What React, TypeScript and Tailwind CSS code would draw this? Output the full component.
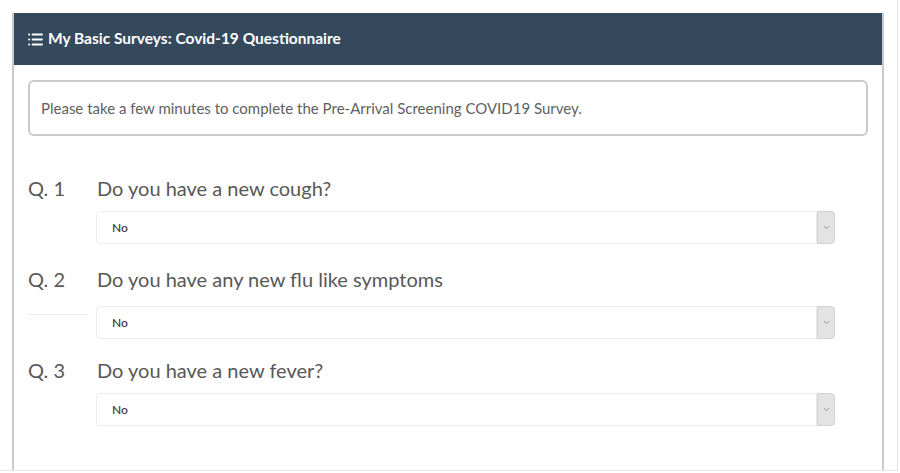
import { List, ChevronDown } from 'lucide-react';

const questions = [
  { n: 'Q. 1', text: 'Do you have a new cough?', mt: 'mt-[40px]', selMt: 'mt-[11px]', line: false },
  { n: 'Q. 2', text: 'Do you have any new flu like symptoms', mt: 'mt-[23px]', selMt: 'mt-[15px]', line: true },
  { n: 'Q. 3', text: 'Do you have a new fever?', mt: 'mt-[19px]', selMt: 'mt-[11px]', line: false },
];

function Select({ line }: { line: boolean }) {
  return (
    <div className="flex items-start">
      <div className="w-[68px] pt-2">
        {line && <div className="h-px w-[60px] bg-[#eeeeee]" />}
      </div>
      <div className="flex h-[33px] w-[739px] items-stretch">
        <div className="flex flex-1 items-center rounded-l border border-[#ececec] bg-white pl-[15px] text-[12px] font-semibold text-[#444]">
          No
        </div>
        <div className="flex w-[18px] items-center justify-center rounded-r border border-[#d2d2d2] bg-[#e3e3e3]">
          <ChevronDown size={9} strokeWidth={2.5} className="text-[#888]" />
        </div>
      </div>
    </div>
  );
}

export default function App() {
  return (
    <div className="h-[473px] w-[900px] overflow-hidden bg-white font-['Lato','Noto_Sans',sans-serif]">
      <div className="h-[471px] w-[898px] border-r border-b border-[#e4e6ea] pl-[12px] pt-[13px]">
        <div className="h-[457px] w-[872px] border-l-2 border-r-2 border-[#c6cbd1]">
          <div className="flex h-[52px] items-center gap-[4px] bg-[#35495d] pl-[13px] text-[15.5px] font-bold text-white">
            <List size={17} strokeWidth={3} />
            <span>My Basic Surveys: Covid-19 Questionnaire</span>
          </div>
          <div className="pl-[14px] pr-[14px] pt-[15px]">
            <div className="flex h-[56px] items-center rounded-md border-2 border-[#cacaca] pl-[11px] text-[15px] text-[#5f5f5f]">
              Please take a few minutes to complete the Pre-Arrival Screening COVID19 Survey.
            </div>
            {questions.map((q) => (
              <div key={q.n}>
                <div className={`${q.mt} flex h-[24px] items-center text-[20px] text-[#585858]`}>
                  <span className="w-[69px] shrink-0">{q.n}</span>
                  <span>{q.text}</span>
                </div>
                <div className={q.selMt}>
                  <Select line={q.line} />
                </div>
              </div>
            ))}
          </div>
        </div>
      </div>
    </div>
  );
}
